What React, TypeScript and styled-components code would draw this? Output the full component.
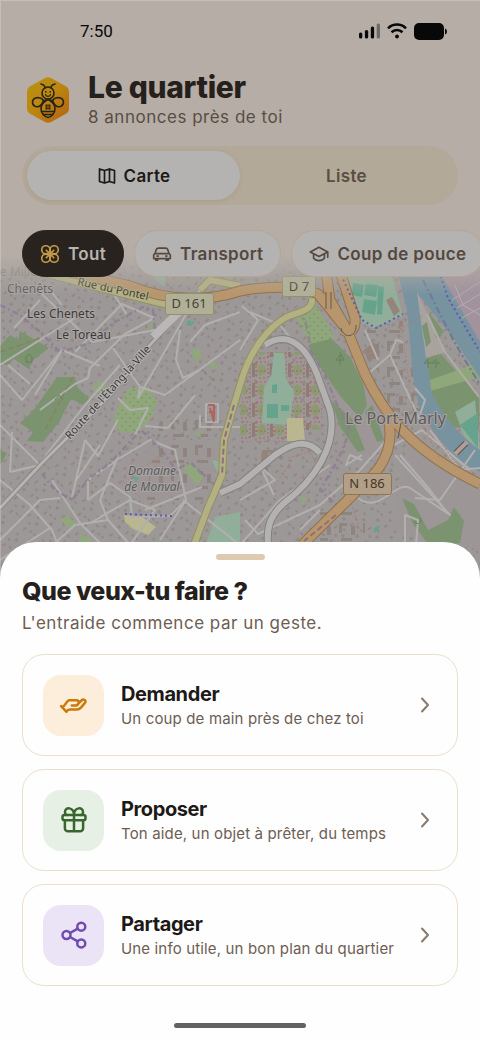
import React from "react";
import styled, { createGlobalStyle } from "styled-components";

const GlobalStyle = createGlobalStyle`
  *, *::before, *::after { box-sizing: border-box; }
  html, body { margin: 0; padding: 0; background: #b5ada6; }
  body { font-family: Inter, "Liberation Sans", sans-serif; color: #25201c; }
  h1, h2, h3, p { margin: 0; }
  button { font: inherit; color: inherit; cursor: pointer; }
`;

const Screen = styled.div`
  position: relative;
  display: flex;
  flex-direction: column;
  min-height: 100vh;
  overflow: hidden;
  background: #b5ada6;
`;

const EdgeGlow = styled.div`
  position: absolute;
  inset: 0;
  z-index: 2;
  pointer-events: none;
  box-shadow: inset 1px 1px 0 rgba(255, 255, 255, 0.22);
`;

const Header = styled.header`
  position: relative;
  z-index: 1;
  padding: 19px 0 0 22px;
`;

const StatusBar = styled.div`
  display: flex;
  align-items: center;
  justify-content: space-between;
  height: 24px;
  padding: 0 33px 0 58px;
  color: #080808;
  font: 400 17px/24px Roboto, sans-serif;
`;

const StatusIcons = styled.div`
  display: flex;
  align-items: center;
  gap: 7px;
`;

const Brand = styled.div`
  display: flex;
  align-items: center;
  gap: 15px;
  margin-top: 27px;
  padding-left: 1px;
`;

const Title = styled.h1`
  font-size: 30px;
  line-height: 34px;
  font-weight: 800;
  letter-spacing: -0.01em;
`;

const Subtitle = styled.p`
  margin-top: 1px;
  font-size: 17px;
  line-height: 24px;
  letter-spacing: 0.03em;
  color: #5a4d44;
`;

const Segmented = styled.div`
  display: grid;
  grid-template-columns: 1fr 1fr;
  margin: 17px 22px 0 0;
  padding: 5px;
  border-radius: 30px;
  background: #b3a999;
`;

const Segment = styled.button<{ $active?: boolean }>`
  display: flex;
  align-items: center;
  justify-content: center;
  gap: 7px;
  height: 49px;
  border: 0;
  border-radius: 25px;
  background: ${(p) => (p.$active ? "#b4b3b2" : "transparent")};
  box-shadow: ${(p) => (p.$active ? "0 1px 4px rgba(110, 85, 50, 0.16)" : "none")};
  color: ${(p) => (p.$active ? "#1d1917" : "#5a4d44")};
  font-size: 17px;
  font-weight: 600;
  letter-spacing: 0.02em;
`;

const Chips = styled.div`
  display: flex;
  gap: 10px;
  margin-top: 25px;
  overflow: hidden;
`;

const Chip = styled.button<{ $active?: boolean }>`
  display: flex;
  flex: none;
  align-items: center;
  gap: 8px;
  height: 47px;
  padding: 0 17px;
  border: 1px solid ${(p) => (p.$active ? "#29231f" : "#b3a693")};
  border-radius: 24px;
  background: ${(p) => (p.$active ? "#29231f" : "#b4b3b2")};
  color: ${(p) => (p.$active ? "#b8b4b0" : "#55483f")};
  font-size: 17px;
  font-weight: 600;
  letter-spacing: 0.02em;
`;

const MapArea = styled.section`
  position: relative;
  flex: 1 0 330px;
  margin: -27px 0 -38px;
  overflow: hidden;
  background: #9d9898;

  &::after {
    content: "";
    position: absolute;
    inset: 0 0 auto;
    height: 44px;
    background: linear-gradient(#b5ada6 10%, rgba(181, 173, 166, 0.5) 55%, rgba(181, 173, 166, 0));
  }

  svg {
    display: block;
    position: absolute;
    inset: 0;
    width: 100%;
    height: 100%;
  }
`;

const Sheet = styled.section`
  position: relative;
  z-index: 3;
  display: flex;
  flex-direction: column;
  padding: 12px 22px 12px;
  border-radius: 36px 36px 0 0;
  background: #fefefe;
`;

const Handle = styled.div`
  align-self: center;
  width: 49px;
  height: 6px;
  border-radius: 3px;
  background: #dccbb0;
`;

const SheetTitle = styled.h2`
  margin-top: 15px;
  font-size: 25px;
  line-height: 32px;
  font-weight: 800;
  letter-spacing: -0.02em;
`;

const SheetText = styled.p`
  margin-top: 4px;
  font-size: 17px;
  line-height: 24px;
  letter-spacing: 0.03em;
  color: #6d5d52;
`;

const Options = styled.div`
  display: flex;
  flex-direction: column;
  gap: 13px;
  margin-top: 19px;
`;

const Option = styled.button`
  display: flex;
  align-items: center;
  height: 102px;
  padding: 0 20px;
  border: 1px solid #ecdfcb;
  border-radius: 22px;
  background: #fefefe;
  text-align: left;
`;

const IconTile = styled.span<{ $bg: string; $fg: string }>`
  display: grid;
  place-items: center;
  flex: none;
  width: 61px;
  height: 61px;
  border-radius: 18px;
  background: ${(p) => p.$bg};
  color: ${(p) => p.$fg};
`;

const OptionBody = styled.span`
  display: flex;
  flex: 1;
  flex-direction: column;
  margin-left: 17px;
  padding-top: 2px;
`;

const OptionTitle = styled.span`
  font-size: 20px;
  line-height: 26px;
  font-weight: 700;
  letter-spacing: -0.02em;
  color: #1d1917;
`;

const OptionText = styled.span`
  font-size: 15px;
  line-height: 24px;
  letter-spacing: 0.01em;
  color: #6d5d52;
`;

const HomeBar = styled.div`
  align-self: center;
  width: 132px;
  height: 5px;
  margin-top: 37px;
  border-radius: 3px;
  background: #636161;
`;

type IconProps = { size?: number; stroke?: number; color?: string; children: React.ReactNode };

const Icon = ({ size = 20, stroke = 2, color = "currentColor", children }: IconProps) => (
  <svg
    width={size}
    height={size}
    viewBox="0 0 24 24"
    fill="none"
    stroke={color}
    strokeWidth={stroke}
    strokeLinecap="round"
    strokeLinejoin="round"
    aria-hidden="true"
  >
    {children}
  </svg>
);

const MapIcon = () => (
  <Icon>
    <path d="M3 3.5l6 2 6-2 6 2v15l-6-2-6 2-6-2z M9 5.5v15 M15 3.5v15" />
  </Icon>
);

const CloverIcon = () => (
  <Icon color="#c39a45" stroke={2}>
    <circle cx="7" cy="7" r="4.9" />
    <circle cx="17" cy="7" r="4.9" />
    <circle cx="7" cy="17" r="4.9" />
    <circle cx="17" cy="17" r="4.9" />
    <path d="M7.5 7.5l9 9M16.5 7.5l-9 9" />
  </Icon>
);

const CarIcon = () => (
  <Icon>
    <path d="M3.500 11.500l1.600-4.700A3 3 0 0 1 8 5h8a3 3 0 0 1 2.900 1.800l1.600 4.700M3.500 11.500h17M3.500 11.500L2 13.300v4.200h20v-4.200l-1.500-1.800M4.500 17.500v2h2.500v-2M17 17.500v2h2.500v-2M6 14.500h1.500M16.500 14.500H18" />
  </Icon>
);

const CapIcon = () => (
  <Icon>
    <path d="M12 4L1.500 9.500 12 15l10.500-5.500zM5.500 12v5.200C8.500 21 15.500 21 18.500 17.200V12M22.500 9.500V16" />
  </Icon>
);

const HandIcon = () => (
  <Icon size={30}>
    <path d="M1.700 12.900L6 17.500M2.900 13.300c2-.3 2.400-3 4.200-4.600.4-.4.900-.6 1.500-.6h5.200c1.500 0 2.400 1.200 1.900 2.300-.4 1.200-1.200 2-2.500 2H10.200M15.400 10.800l2.800-2.600c1.500-1.400 3.800.1 2.700 1.900l-3.400 4c-.9 1-1.600 1.500-3 1.500H9c-1.600 0-2 .4-3 1.400" />
  </Icon>
);

const GiftIcon = () => (
  <Icon size={30}>
    <rect x="2.800" y="8" width="18.400" height="4.200" rx="1.600" />
    <path d="M4.700 12.200v6.300a2.500 2.500 0 0 0 2.500 2.500h9.600a2.500 2.500 0 0 0 2.500-2.500v-6.300M12 8v13M12 8c0-6.500-7.300-6.800-7.200-2.500C4.800 7 5.500 8 6.500 8M12 8c0-6.500 7.300-6.800 7.200-2.500C19.200 7 18.500 8 17.500 8" />
  </Icon>
);

const ShareIcon = () => (
  <Icon size={30}>
    <circle cx="6" cy="12" r="3.200" />
    <circle cx="17.800" cy="5.300" r="3.200" />
    <circle cx="17.800" cy="18.700" r="3.200" />
    <path d="M8.800 10.400L15 6.900M8.800 13.600l6.200 3.500" />
  </Icon>
);

const Chevron = () => (
  <Icon size={24} color="#8a7a6e">
    <path d="M9 5.500l6 6.500-6 6.500" />
  </Icon>
);

const BeeLogo = () => (
  <svg width="50" height="50" viewBox="0 0 50 50" fill="none" role="img" aria-label="Abeille">
    <defs>
      <linearGradient id="honey" x1="6" y1="6" x2="44" y2="44" gradientUnits="userSpaceOnUse">
        <stop stopColor="#b69210" />
        <stop offset="0.500" stopColor="#bd8510" />
        <stop offset="1" stopColor="#b5650f" />
      </linearGradient>
    </defs>
    <path
      d="M22 3q3-1.500 6 0l14.500 8q3.500 2 3.500 6v16q0 4-3.500 6L28 47q-3 1.500-6 0L7.500 39Q4 37 4 33V17q0-4 3.500-6z"
      fill="url(#honey)"
    />
    <g stroke="#292418" strokeWidth="1.600" strokeLinecap="round">
      <path d="M22 13c0-2-1.500-3.500-4-4M28 13c0-2 1.500-3.500 4-4" />
      <circle cx="25" cy="18" r="6" />
      <path d="M22.500 19.500c1 2.500 4 2.500 5 0" strokeWidth="1.200" />
      <path d="M20.500 26c-1-3-5-4-8-3-4 1.500-4 7 0 8.500 3 1 6-1 7-4zM29.500 26c1-3 5-4 8-3 4 1.500 4 7 0 8.500-3 1-6-1-7-4z" />
      <path d="M25 24.500c-4 2-7 5-7 9 0 5 4 8.500 7 9 3-.5 7-4 7-9 0-4-3-7-7-9z" />
      <path d="M18.500 36.500h13M20 39.500h10" />
    </g>
    <path d="M25 23.500l-6 5.500 1-4zM25 23.500l6 5.500-1-4z" fill="#292418" />
    <g fill="#292418">
      <circle cx="22.800" cy="16.800" r="0.900" />
      <circle cx="27.200" cy="16.800" r="0.900" />
      <path d="M22.500 29.500h2.200v2.200h-2.200zM25.300 29.500h2.200v2.200h-2.200zM22.500 32.300h2.200v2.200h-2.200zM25.300 32.300h2.200v2.200h-2.200z" />
    </g>
  </svg>
);

const SignalIcon = () => (
  <svg width="21" height="16" viewBox="0 0 21 16" aria-hidden="true">
    <rect x="0" y="9.500" width="3.300" height="6" rx="1.500" fill="#080808" />
    <rect x="5.900" y="7" width="3.300" height="8.500" rx="1.500" fill="#080808" />
    <rect x="11.800" y="3.500" width="3.300" height="12" rx="1.500" fill="#080808" />
    <rect x="17.700" y="0.500" width="3.300" height="15" rx="1.500" fill="#6f6a66" />
  </svg>
);

const WifiIcon = () => (
  <svg width="20" height="16" viewBox="0 0 20 16" fill="none" stroke="#080808" strokeWidth="2.600" aria-hidden="true">
    <path d="M1 5.300c5-5 13-5 18 0M4.500 9.200c3.200-3 7.800-3 11 0" />
    <circle cx="10" cy="13.500" r="1.900" fill="#080808" stroke="none" />
  </svg>
);

const BatteryIcon = () => (
  <svg width="33" height="17" viewBox="0 0 33 17" fill="#080808" aria-hidden="true">
    <rect width="30" height="17" rx="5" />
    <path d="M31 5.500c2.600.6 2.600 5.400 0 6z" />
  </svg>
);

const minorRoads = [
  "M0 365L75 318 M75 352L122 304 154 318 125 334 90 368 88 378 75 384 40 410",
  "M40 292L75 326 92 342 155 330 M105 280L127 315 M50 290L62 305M14 328L40 300",
  "M0 375L22 400 62 350 100 366 M8 365L30 384 M0 425L40 465 10 472 12 432",
  "M62 350L35 395M113 348L140 387 138 398 200 290M140 387L165 395 240 340",
  "M180 330L176 360 183 378 200 370M190 342L205 325 240 312M200 415L200 427 240 427",
  "M40 463L85 405 120 365 M85 440L72 497 M100 445L75 482 M85 440L98 456 118 420",
  "M118 456L100 500 108 520 130 545M108 520L75 525 20 575M130 545L155 510 130 500 92 522",
  "M88 500L110 483 130 497 132 517 170 516 186 500 175 450 150 440 120 458 88 480 88 500",
  "M0 480L30 505 52 530 70 575M0 540L40 500 60 498M50 528L0 560M145 426L168 428 195 395",
  "M118 398L130 410 148 408 135 435M52 480L80 523 102 545M183 500L240 545M186 500L160 540M202 487L145 510",
  "M240 350L258 320 242 306M250 312L280 325 292 340M240 545L280 500 330 465M240 500L275 480 262 468",
  "M262 470L274 495M245 520L258 534 320 505 360 470 400 425M358 498C380 515 395 480 410 488L450 515 395 455",
  "M400 455L430 490 445 510M392 446L422 430 470 470M430 430L460 470 480 468M370 372L390 355 420 420",
  "M390 355L396 340 404 342M300 530L320 510M405 545L405 515 418 520 416 545M415 498L440 500 475 450",
  "M362 455L346 465 350 455 362 460M365 330L378 360M415 388L425 400 420 415",
];

const NeighbourhoodMap = () => (
  <svg viewBox="0 250 480 330" preserveAspectRatio="xMidYMin slice" role="img" aria-label="Carte du quartier">
    <defs>
      <pattern id="houses" width="26" height="22" patternUnits="userSpaceOnUse" patternTransform="rotate(-38)">
        <path
          d="M2 3h3v3H2zM9 1h2v3H9zM16 5h4v2h-4zM22 12h2v3h-2zM4 13h4v2H4zM12 11h2v3h-2zM17 16h3v3h-3zM8 18h2v3H8z"
          fill="#928885"
        />
      </pattern>
      <pattern id="blocks" width="24" height="26" patternUnits="userSpaceOnUse">
        <path d="M3 3h8v3H6v7H3zM15 6h4v9h-4zM5 18h11v3H5z" fill="#8f847e" />
      </pattern>
      <pattern id="orchard" width="8" height="8" patternUnits="userSpaceOnUse">
        <circle cx="2" cy="2" r="0.800" fill="#6d8a5b" />
        <circle cx="6" cy="6" r="0.800" fill="#6d8a5b" />
      </pattern>
      <pattern id="paths" width="18" height="20" patternUnits="userSpaceOnUse">
        <path d="M0 3h3v14H0z" fill="#8c7d76" />
        <path d="M6 6l4-2 4 4-1 6-5 2-3-4z" fill="#8c9a72" />
        <path d="M4 2h13M4 2v16M16 4v14M4 11h12M7 18h8" stroke="#b4605c" strokeDasharray="2 2" fill="none" />
      </pattern>
    </defs>

    <rect y="250" width="480" height="330" fill="#9d9898" />
    <rect y="250" width="480" height="330" fill="url(#houses)" />
    <path d="M160 440h55v60h-80v-40zM320 380h50l20 60-30 30zM410 440l70 50v60l-90-20z" fill="#9c9796" />
    <path d="M160 420h55v80h-70zM365 330l40-10 20 95-35-5zM320 510h45v32h-45z" fill="url(#blocks)" />

    <g fill="#7c9370">
      <path d="M0 346l10-11 8 5 2-9 12 7 17 10-13 10-6 5v7l-7-5-9-6-7 6-7-1z" />
      <path d="M33 411l24-34h18l3 11 12 11-7 6-12-6-12 23-16 20-16-1 6-9-13-9z" />
      <path d="M310 343l20-6 20 20 13 26 4 22-7 13-20-22-17-25-13-20z" />
      <path d="M331 400l22 20 12 30-7 2-18-25zM372 405l12 35-7 2-12-30z" />
      <path d="M402 498l12 6 14 26 20-10 6-13 10 14-4 22-30 3-17-22z" />
      <path d="M425 357l16-3 38 43v32l-28-2-21-29zM420 325l10-12 12 22-14 14z" />
      <path d="M425 400h45l-8 25-20 2zM0 450l7 3-7 12z" />
    </g>
    <g fill="#90a77c">
      <path d="M297 318l16-18 18 30 3 8-24 6zM118 407l10-18 18-3 11 15-5 15-14 17-20-2-4-12z" />
      <path d="M92 388l8-8 7 8-5 8zM190 353l8-5 4 6-5 8zM205 360l8 2 7 7-8-1zM146 325l8-2v9z" />
      <path d="M183 468l8-6 12 16-6 8zM60 519l8-3 9 8-7 4zM195 435l5-7 1 10zM300 496l7 2-5 6zM80 535l12 3-4 8-9-3z" />
      <path d="M430 380l50-18v15l-50 14z" />
    </g>
    <path d="M297 318l16-18 18 30 3 8-24 6zM118 407l10-18 18-3 11 15-5 15-14 17-20-2-4-12z" fill="url(#orchard)" />
    <path d="M250 352h58l14 28v50h-22l-6 12h-54v-30z" fill="url(#paths)" />
    <g fill="#91ae9a">
      <path d="M340 275l50-6 13 47-30 12-14-7zM274 353h10l2 26 8 12-4 34-28-2 2-35 7-12zM207 542l8-25 25-5v30z" />
      <path d="M455 412l20-12 5 50-15-12zM150 275h16l-2 12zM128 520l12-2-3 14-8-5zM212 460l9 2-4 10z" />
    </g>
    <g fill="#67a38c">
      <path d="M353 283l11 2-2 12-10-2zM366 284l12 1-2 12-12-2zM364 299l13 2-2 14-13-3zM378 286l6 1-2 28-5-1zM267 404h11v14h-11zM272 385l5-1v9h-5zM281 405h8v6h-8zM460 425l18-12v35zM132 476l7 2-3 4zM374 528l6-3-1 5-5 3zM188 320l7 2-4 4-5-1z" />
    </g>
    <path d="M386 300l6-3 8 14-6 5zM262 450h20v10l-14-8v20h-8zM364 350l10-8 6 14-12 5z" fill="#95847b" />
    <path d="M287 418h16l2 24-18-1zM124 515l18 2 14 10-8 8-14-6-9-7z" fill="#bab68f" />

    <path d="M397 270l40-5 43 75v38l-28-42-35-43 6 35 4 32 7 50-13 6-8-40-6-66z" fill="#7893a0" />
    <path d="M421 398l13-2c8 20 26 40 46 54v22c-27-12-46-38-59-60z" fill="#7893a0" />
    <path d="M437 268l43 74v-80z" fill="#a1929d" />
    <path d="M417 292l14 30 14 30-19 6z" fill="#a9a3a0" />
    <path d="M422 326l5-4 4 20-5 5zM432 316l12 16-8 6z" fill="#7c9370" />
    <path d="M452 300l28-18M457 308l23-14M462 318l18-10M455 285l8 20 17 10" stroke="#b4adb1" fill="none" />
    <path d="M427 314l18 38 34 45" stroke="#b0ada5" strokeWidth="2" fill="none" />
    <path d="M423 280L438 310 456 345 480 385" stroke="#6e7a90" strokeWidth="2" strokeDasharray="7 3 2 3" fill="none" />

    <g fill="none" stroke="#b2b0af" strokeWidth="2" strokeLinejoin="round">
      {minorRoads.map((d) => (
        <path key={d} d={d} />
      ))}
    </g>

    <g fill="none" stroke="#8e7b93" strokeWidth="2.500" strokeDasharray="6 3 2 3" opacity="0.800">
      <path d="M0 305L20 315 40 332 60 352 90 343 113 323 143 307 153 310 155 333" />
      <path d="M42 474L55 490 72 500 88 480 110 463 141 430 160 448 176 470 190 462 218 488" />
      <path d="M300 310L308 330 310 350 325 375 335 400 350 430 338 460 320 490 340 508" />
      <path d="M0 508L40 464 64 440" />
    </g>

    <g fill="none" strokeLinejoin="round">
      <path d="M0 508L42 463 110 395 150 345 182 310 215 292" stroke="#8c8686" strokeWidth="5" />
      <path d="M0 508L42 463 110 395 150 345 182 310 215 292" stroke="#b6b3b2" strokeWidth="3" />
      <path d="M153 337L180 311" stroke="#bab8b7" strokeWidth="8" />
      <path d="M265 345C285 332 303 340 317 374L330 410C338 445 315 480 283 504C268 518 267 530 268 545M320 453C307 438 292 443 275 455L240 484 220 493" stroke="#858181" strokeWidth="8" />
      <path d="M265 345C285 332 303 340 317 374L330 410C338 445 315 480 283 504C268 518 267 530 268 545M320 453C307 438 292 443 275 455L240 484 220 493" stroke="#b3b2b1" strokeWidth="6" />
      <path d="M40 272L100 288 160 303 182 308M312 298C314 312 295 312 285 318C268 328 250 350 241 382L234 405 224 440 222 475 207 510 194 545M200 290L210 280 240 286" stroke="#91905e" strokeWidth="8" />
      <path d="M40 272L100 288 160 303 182 308M312 298C314 312 295 312 285 318C268 328 250 350 241 382L234 405 224 440 222 475 207 510 194 545M200 290L210 280 240 286" stroke="#b3b184" strokeWidth="6" />
      <path d="M70 272L130 286C170 302 210 301 240 291C270 285 300 286 318 294L347 330 365 374C385 415 410 450 480 484M325 265L330 300 347 330M338 265L355 318C356 330 350 335 343 330M387 415C395 440 387 463 368 480L302 545" stroke="#91714c" strokeWidth="11" />
      <path d="M70 272L130 286C170 302 210 301 240 291C270 285 300 286 318 294L347 330 365 374C385 415 410 450 480 484M325 265L330 300 347 330M338 265L355 318C356 330 350 335 343 330M387 415C395 440 387 463 368 480L302 545" stroke="#b7966d" strokeWidth="9" />
      <path d="M326 292v17M331 292v17M341 328c3 12 16 9 15-3M398 438l3-15" stroke="#66594d" />
      <path d="M336 515l-32 26M234 405l-10 35-2 35" stroke="#8e6f7b" strokeWidth="2" strokeDasharray="6 3" />
      <path d="M341 275L362 320 376 328 403 314M436 262L448 298 480 352M125 514L172 516" stroke="#6058b4" strokeWidth="2" strokeDasharray="2 3" />
      <path d="M400 320l6 40 8 60M420 420l20 40M374 480l-4 20M292 460l-20 30M140 470l20-15-12 30M350 500l10 30M288 458l22-6 6 12-16 14M132 462l-10 22 20 14M400 330l22-14M430 425l25 38" stroke="#b37b74" strokeDasharray="2 2" />
      <path d="M0 352L40 338M45 430L75 372M203 370l12 12" stroke="#8b7a55" strokeDasharray="6 3" />
      <path d="M456 453l10-10" stroke="#4c4945" strokeWidth="6" />
      <path d="M455 454l12-12" stroke="#b39d95" strokeWidth="4" />
      <path d="M206 404h12v18h-12z" stroke="#b2b0af" strokeWidth="2" />
      <path d="M208 405h6v15M210 408l4 14M209 412h4" stroke="#b0645f" strokeWidth="2" />
    </g>

    <g fill="none" stroke="#647f5c">
      <path d="M26 362v-5l3-3 3 3v5zM340 365v-10l-4 5h8l-4-8M428 368v-9l-4 4h8M436 368v-9l-4 4h8M55 400l4-5 4 5M415 522a3 3 0 1 0 4-4" />
    </g>

    <g fontFamily="'Noto Sans', sans-serif" fontSize="13" fill="#3c3938" stroke="#aaa5a5" strokeWidth="2" paintOrder="stroke" strokeLinejoin="round">
      <text x="0" y="276" fontSize="12" fill="#77726e" stroke="none">e Milieu</text>
      <text x="7" y="293" fontSize="12" fill="#5d5958">Chenêts</text>
      <text x="27" y="318" fontSize="12">Les Chenets</text>
      <text x="56" y="339" fontSize="12">Le Toreau</text>
      <text transform="translate(77 285) rotate(12)" fontSize="11" stroke="#b3b184">Rue du Pontel</text>
      <text transform="translate(70 440) rotate(-48)" fontSize="11" stroke="#b6b3b2">Route de l'Étang-la-Ville</text>
      <g fontStyle="italic" fontSize="12" fill="#5c5a5c" textAnchor="middle">
        <text x="152" y="475">Domaine</text>
        <text x="152" y="491">de Monval</text>
      </g>
      <text x="345" y="424" fontSize="16" fill="#5f5a5a">Le Port-Marly</text>
    </g>

    <g fontFamily="'Noto Sans', sans-serif" fontSize="13" textAnchor="middle" fill="#44413a">
      <rect x="165.500" y="293.500" width="48" height="21" rx="2" fill="#b1b096" stroke="#92916c" />
      <text x="189" y="308">D 161</text>
      <rect x="282.500" y="276.500" width="33" height="20" rx="2" fill="#b1b096" stroke="#92916c" />
      <text x="299" y="291">D 7</text>
      <rect x="343.500" y="473.500" width="48" height="21" rx="2" fill="#b39f87" stroke="#8f7450" />
      <text x="367" y="488" fill="#45372a">N 186</text>
    </g>
  </svg>
);

const options = [
  { title: "Demander", text: "Un coup de main près de chez toi", bg: "#fceedb", fg: "#c97a0a", icon: <HandIcon /> },
  { title: "Proposer", text: "Ton aide, un objet à prêter, du temps", bg: "#e6f0e4", fg: "#39662f", icon: <GiftIcon /> },
  { title: "Partager", text: "Une info utile, un bon plan du quartier", bg: "#ebe4f6", fg: "#714cae", icon: <ShareIcon /> },
];

export default function App() {
  return (
    <Screen>
      <GlobalStyle />
      <Header>
        <StatusBar>
          <span>7:50</span>
          <StatusIcons>
            <SignalIcon />
            <WifiIcon />
            <BatteryIcon />
          </StatusIcons>
        </StatusBar>
        <Brand>
          <BeeLogo />
          <div>
            <Title>Le quartier</Title>
            <Subtitle>8 annonces près de toi</Subtitle>
          </div>
        </Brand>
        <Segmented>
          <Segment type="button" $active aria-pressed="true">
            <MapIcon />
            Carte
          </Segment>
          <Segment type="button" aria-pressed="false">
            Liste
          </Segment>
        </Segmented>
        <Chips>
          <Chip type="button" $active aria-pressed="true">
            <CloverIcon />
            Tout
          </Chip>
          <Chip type="button" aria-pressed="false">
            <CarIcon />
            Transport
          </Chip>
          <Chip type="button" aria-pressed="false">
            <CapIcon />
            Coup de pouce
          </Chip>
        </Chips>
      </Header>
      <MapArea>
        <NeighbourhoodMap />
      </MapArea>
      <EdgeGlow />
      <Sheet role="dialog" aria-labelledby="sheet-title">
        <Handle />
        <SheetTitle id="sheet-title">Que veux-tu faire ?</SheetTitle>
        <SheetText>L'entraide commence par un geste.</SheetText>
        <Options>
          {options.map((o) => (
            <Option type="button" key={o.title}>
              <IconTile $bg={o.bg} $fg={o.fg}>
                {o.icon}
              </IconTile>
              <OptionBody>
                <OptionTitle>{o.title}</OptionTitle>
                <OptionText>{o.text}</OptionText>
              </OptionBody>
              <Chevron />
            </Option>
          ))}
        </Options>
        <HomeBar />
      </Sheet>
    </Screen>
  );
}
